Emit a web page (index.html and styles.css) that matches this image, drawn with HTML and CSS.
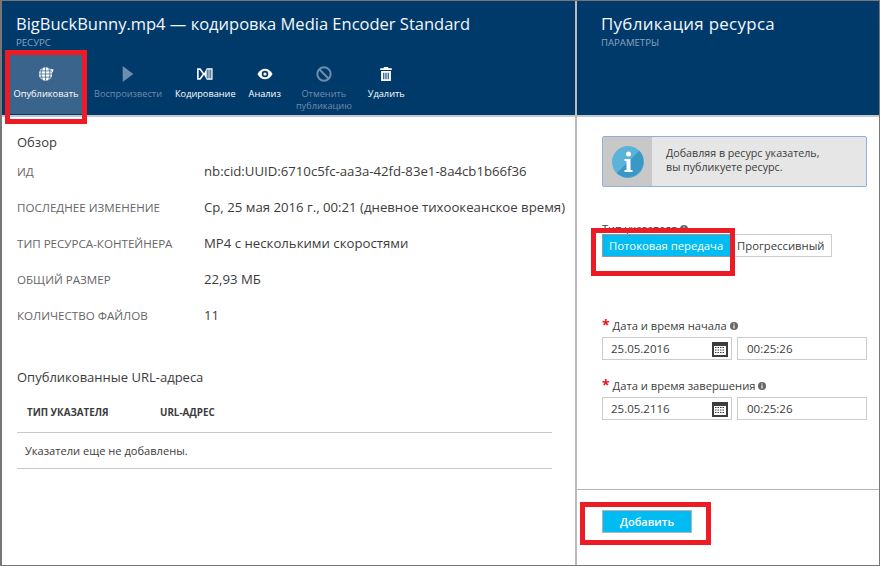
FILE: index.html
```html
<!DOCTYPE html>
<html lang="ru">
<head>
  <meta charset="UTF-8" />
  <title>Публикация ресурса</title>
  <link rel="stylesheet" href="styles.css">
</head>
<body>
  <div class="portal">
    <section class="blade blade-left">
      <header class="blade-head">
        <h1>BigBuckBunny.mp4 — кодировка Media Encoder Standard</h1>
        <div class="subtitle">РЕСУРС</div>
        <nav class="toolbar">
          <div class="tool tool-active">
            <svg class="icon" viewBox="0 0 18 18"><circle cx="8.5" cy="9" r="7.5" fill="#fff"/><path d="M1 9h15M2 5.500h13M2 12.500h13M8.500 1.500v15M5 2.500c-2 3.500-2 9.500 0 13M12 2.500c2 3.500 2 9.500 0 13" stroke="#3a648c" stroke-width="0.9" fill="none"/><path d="M14 3l3.500 1-1 3.500z" fill="#fff"/></svg>
            <span>Опубликовать</span>
          </div>
          <div class="tool tool-off">
            <svg class="icon" viewBox="0 0 18 18"><path d="M3 0l12 9-12 9z" fill="#6e8cab"/></svg>
            <span>Воспроизвести</span>
          </div>
          <div class="tool">
            <svg class="icon" viewBox="0 0 18 18"><path d="M1 3.500h2.500L7.500 9l-4 5.500H1z" fill="none" stroke="#fff" stroke-width="1.800"/><path d="M7.500 9l3.500-6.500h6.500v13H11z" fill="#fff"/><path d="M11.500 4v10M13.500 4v10M15.500 4v10" stroke="#003a6b" stroke-width="1"/></svg>
            <span>Кодирование</span>
          </div>
          <div class="tool">
            <svg class="icon" viewBox="0 0 18 18"><path d="M0.500 9C3 4.500 6 3 9 3s6 1.500 8.500 6C15 13.500 12 15 9 15S3 13.500 0.500 9z" fill="#fff"/><circle cx="9" cy="9" r="3.700" fill="#003a6b"/><circle cx="9" cy="9" r="1.800" fill="#fff"/></svg>
            <span>Анализ</span>
          </div>
          <div class="tool tool-off tool-cancel">
            <svg class="icon" viewBox="0 0 18 18"><circle cx="9" cy="9" r="7.500" fill="none" stroke="#6e8cab" stroke-width="2.200"/><path d="M4 4l10 10" stroke="#6e8cab" stroke-width="2.200"/></svg>
            <span>Отменить<br>публикацию</span>
          </div>
          <div class="tool">
            <svg class="icon" viewBox="0 0 18 18"><path d="M6.500 2.500V1h5v1.500H15.500v2h-13v-2zM3.500 5.500h11V17h-11z" fill="#fff"/><path d="M6.500 7.500v7.500M9 7.500v7.500M11.500 7.500v7.500" stroke="#003a6b" stroke-width="1.200"/></svg>
            <span>Удалить</span>
          </div>
        </nav>
      </header>
      <div class="blade-body">
        <h2 class="section-title">Обзор</h2>
        <dl class="props">
          <div class="prop"><dt>ИД</dt><dd>nb:cid:UUID:6710c5fc-aa3a-42fd-83e1-8a4cb1b66f36</dd></div>
          <div class="prop"><dt>ПОСЛЕДНЕЕ ИЗМЕНЕНИЕ</dt><dd>Ср, 25 мая 2016 г., 00:21 (дневное тихоокеанское время)</dd></div>
          <div class="prop"><dt>ТИП РЕСУРСА-КОНТЕЙНЕРА</dt><dd>MP4 с несколькими скоростями</dd></div>
          <div class="prop"><dt>ОБЩИЙ РАЗМЕР</dt><dd>22,93 МБ</dd></div>
          <div class="prop"><dt>КОЛИЧЕСТВО ФАЙЛОВ</dt><dd>11</dd></div>
        </dl>
        <h2 class="section-title urls-title">Опубликованные URL-адреса</h2>
        <div class="urls-head"><span class="col-type">ТИП УКАЗАТЕЛЯ</span><span>URL-АДРЕС</span></div>
        <div class="urls-empty">Указатели еще не добавлены.</div>
      </div>
    </section>

    <section class="blade blade-right">
      <header class="blade-head">
        <h1 class="title-big">Публикация ресурса</h1>
        <div class="subtitle">ПАРАМЕТРЫ</div>
      </header>
      <div class="form-body">
        <div class="notice">
          <div class="notice-icon">
            <svg viewBox="0 0 32 32" width="32" height="32"><circle cx="16" cy="16" r="16" fill="#5cb3d9"/><path d="M27.300 4.700A16 16 0 0 1 4.700 27.300z" fill="#3a98c6"/><circle cx="16.500" cy="8" r="2.500" fill="#fff"/><path d="M12.500 13h6v11h2v2h-8v-2h2v-9h-2z" fill="#fff"/></svg>
          </div>
          <div class="notice-text">Добавляя в ресурс указатель,<br>вы публикуете ресурс.</div>
        </div>
        <div class="type-label">Тип указателя <svg class="hint" viewBox="0 0 8 8"><circle cx="4" cy="4" r="4" fill="#666"/><path d="M3.400 1.500h1.200v1H3.400zM3.400 3.300h1.200v3.200H3.400z" fill="#fff"/></svg></div>
        <div class="switch">
          <span class="switch-on">Потоковая передача</span><span class="switch-off">Прогрессивный</span>
        </div>
        <div class="date-label date-first"><b>*</b> Дата и время начала <svg class="hint" viewBox="0 0 8 8"><circle cx="4" cy="4" r="4" fill="#666"/><path d="M3.400 1.500h1.200v1H3.400zM3.400 3.300h1.200v3.200H3.400z" fill="#fff"/></svg></div>
        <div class="date-row">
          <div class="field field-date">25.05.2016
            <svg class="cal" viewBox="0 0 16 16"><path d="M0 1h16v15H0z" fill="#3c3c3c"/><path d="M2 5h12v9H2z" fill="#fff"/><path d="M3 6.500h10M3 9h10M3 11.500h10" stroke="#3c3c3c" stroke-width="1.200" stroke-dasharray="1.500 1"/></svg>
          </div>
          <div class="field field-time">00:25:26</div>
        </div>
        <div class="date-label date-second"><b>*</b> Дата и время завершения <svg class="hint" viewBox="0 0 8 8"><circle cx="4" cy="4" r="4" fill="#666"/><path d="M3.400 1.500h1.200v1H3.400zM3.400 3.300h1.200v3.200H3.400z" fill="#fff"/></svg></div>
        <div class="date-row">
          <div class="field field-date">25.05.2116
            <svg class="cal" viewBox="0 0 16 16"><path d="M0 1h16v15H0z" fill="#3c3c3c"/><path d="M2 5h12v9H2z" fill="#fff"/><path d="M3 6.500h10M3 9h10M3 11.500h10" stroke="#3c3c3c" stroke-width="1.200" stroke-dasharray="1.500 1"/></svg>
          </div>
          <div class="field field-time">00:25:26</div>
        </div>
      </div>
      <footer class="form-foot">
        <button class="btn-add">Добавить</button>
      </footer>
    </section>

    <div class="mark mark-publish"></div>
    <div class="mark mark-stream"></div>
    <div class="mark mark-add"></div>
  </div>
</body>
</html>
```

FILE: styles.css
```css
* {
  box-sizing: border-box;
}
body {
  margin: 0;
  font-family: "Open Sans", "Noto Sans", sans-serif;
  background: #fff;
  color: #3c3c3c;
}
.portal {
  position: relative;
  display: flex;
  width: 880px;
  height: 566px;
  border: 1px solid #777;
  border-left-width: 2px;
  overflow: hidden;
}
.blade-left {
  width: 575px;
  border-right: 2px solid #bbb;
}
.blade-right {
  flex: 1;
  display: flex;
  flex-direction: column;
}
.blade-head {
  height: 116px;
  background: #003a6b;
  border-bottom: 2px solid #c4c8cc;
  padding: 13px 14px 0;
  color: #fff;
}
.blade-right .blade-head {
  padding-left: 24px;
}
h1 {
  margin: 0;
  font-size: 16.5px;
  line-height: 20px;
  font-weight: 400;
  color: #f4f7fa;
  white-space: nowrap;
}
.title-big {
  font-size: 16.9px;
  letter-spacing: 0.3px;
}
.subtitle {
  margin-top: 3px;
  font-size: 9.6px;
  line-height: 12px;
  color: #8ba5bf;
}
.toolbar {
  display: flex;
  margin: 5px 0 0 -6px;
}
.tool {
  display: flex;
  flex-direction: column;
  align-items: center;
  height: 60px;
  padding: 12px 6.5px 0;
  font-size: 9.2px;
  line-height: 12px;
  text-align: center;
  color: #fff;
}
.tool-active {
  width: 72px;
  margin-right: 5.5px;
  padding-left: 0;
  padding-right: 0;
  background: #3a648c;
  font-size: 9.3px;
}
.tool-off {
  color: #6e8cab;
}
.tool-cancel {
  margin: 0 3px 0 2px;
}
.icon {
  width: 16px;
  height: 16px;
  margin-bottom: 6px;
  flex: none;
}
.blade-body {
  padding: 16px 0 0 15px;
}
.section-title {
  margin: 0;
  font-size: 13px;
  line-height: 18px;
  font-weight: 400;
}
.props {
  margin: 11px 0 0;
}
.prop {
  display: flex;
  height: 36px;
  align-items: baseline;
}
dt {
  width: 187px;
  flex: none;
  font-size: 11.6px;
  color: #666;
}
dd {
  margin: 0;
  font-size: 13.2px;
  white-space: nowrap;
}
.urls-title {
  margin-top: 26px;
}
.urls-head {
  display: flex;
  height: 38px;
  margin-top: 9px;
  width: 535px;
  padding: 11px 0 0 10px;
  border-bottom: 1px solid #c8c8c8;
  font-size: 9.8px;
  font-weight: 700;
  line-height: 14px;
}
.col-type {
  width: 133px;
}
.urls-empty {
  width: 535px;
  height: 36px;
  padding: 9px 0 0 8px;
  border-bottom: 1px solid #c8c8c8;
  font-size: 11.1px;
  line-height: 18px;
}
.form-body {
  flex: 1;
  padding: 19px 12px 0 25px;
}
.notice {
  display: flex;
  height: 51px;
  border: 1px solid #8fb0dc;
  border-radius: 2px;
  background: #e6e6e6;
}
.notice-icon {
  display: flex;
  align-items: center;
  justify-content: center;
  width: 49px;
  background: #c8c8c8;
}
.notice-text {
  padding: 9px 0 0 14px;
  font-size: 10.7px;
  line-height: 14px;
}
.type-label {
  margin-top: 34px;
  font-size: 11px;
  line-height: 16px;
}
.hint {
  width: 8px;
  height: 8px;
}
.switch {
  display: flex;
  font-size: 11.3px;
  line-height: 21px;
  margin-top: -3px;
}
.switch-on {
  width: 129px;
  height: 23px;
  padding-left: 6px;
  background: #00bcf2;
  border: 1px solid #999;
  color: #fff;
}
.switch-off {
  width: 101px;
  height: 23px;
  padding-left: 6px;
  border: 1px solid #ccc;
  border-left: 0;
}
.date-label {
  height: 16px;
  font-size: 11.2px;
  line-height: 16px;
}
.date-label b {
  color: #e81123;
  font-size: 14px;
  line-height: 10px;
}
.date-first {
  margin-top: 61px;
}
.date-second {
  margin-top: 18px;
}
.date-row {
  display: flex;
  gap: 5px;
  margin-top: 3px;
}
.field {
  height: 23px;
  border: 1px solid #ccc;
  padding-left: 8px;
  font-size: 11.5px;
  line-height: 21px;
}
.field-date {
  display: flex;
  align-items: center;
  justify-content: space-between;
  width: 130px;
  padding-right: 3px;
}
.field-time {
  width: 130px;
  padding-left: 9px;
}
.cal {
  width: 16px;
  height: 16px;
}
.form-foot {
  height: 76px;
  padding: 20px 0 0 25px;
  border-top: 1px solid #b4b4b4;
}
.btn-add {
  display: block;
  width: 90px;
  height: 23px;
  padding: 0;
  background: #00bcf2;
  border: 1px solid #b4b4b4;
  color: #fff;
  font-family: inherit;
  font-size: 11px;
  font-weight: 600;
}
.mark {
  position: absolute;
  border: 5px solid #ed1c24;
}
.mark-publish {
  left: 3px;
  top: 49px;
  width: 82px;
  height: 74px;
}
.mark-stream {
  left: 589px;
  top: 227px;
  width: 144px;
  height: 48px;
}
.mark-add {
  left: 578px;
  top: 501px;
  width: 131px;
  height: 43px;
}
```
